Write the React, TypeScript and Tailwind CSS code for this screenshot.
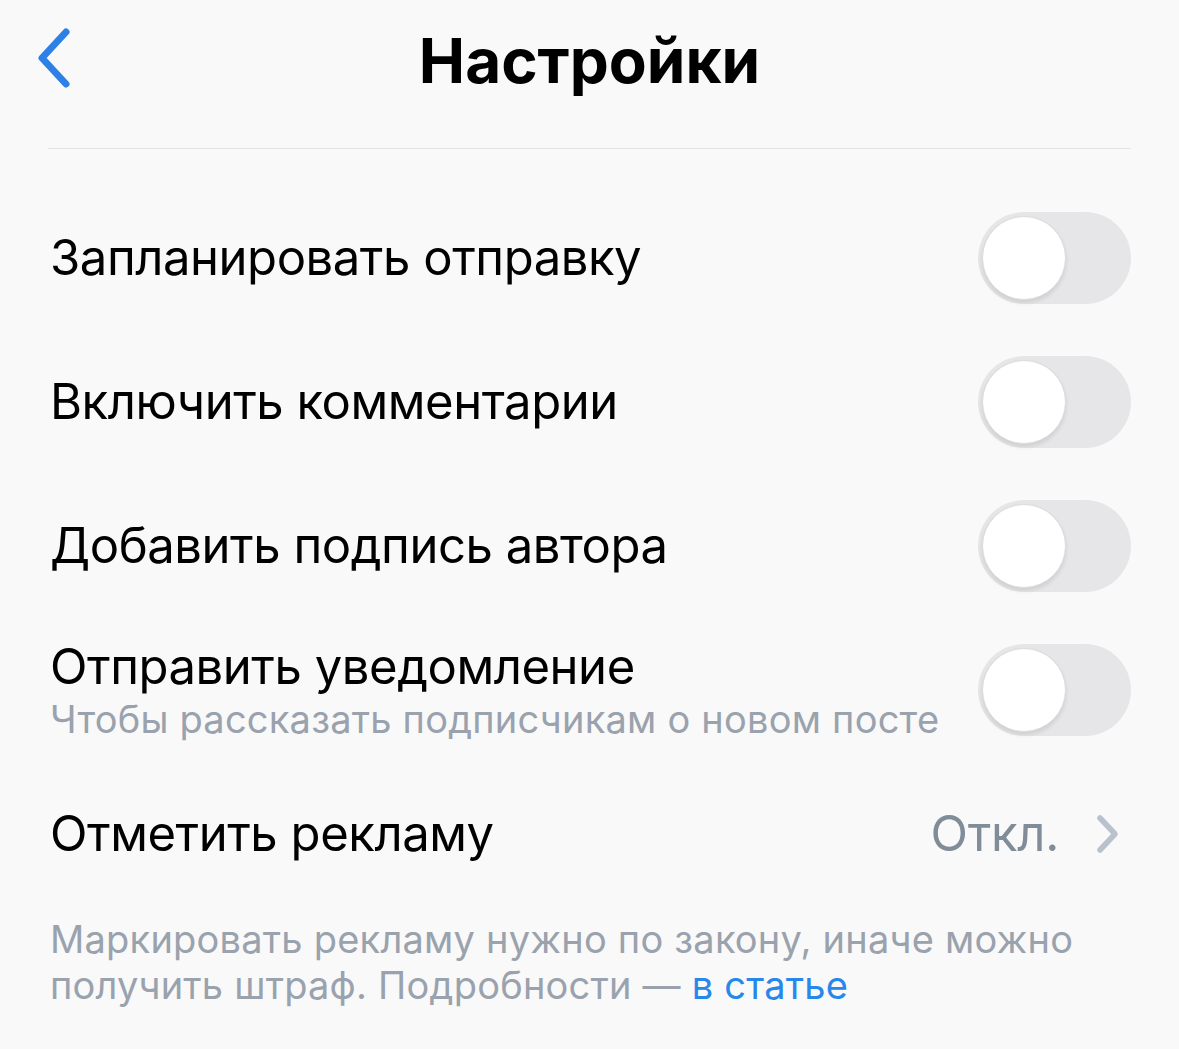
import { useState } from "react";

type Setting = {
    id: string;
    title: string;
    hint?: string;
};

const settings: Setting[] = [
    { id: "schedule", title: "Запланировать отправку" },
    { id: "comments", title: "Включить комментарии" },
    { id: "signature", title: "Добавить подпись автора" },
    {
        id: "notify",
        title: "Отправить уведомление",
        hint: "Чтобы рассказать подписчикам о новом посте",
    },
];

function Toggle({ on, onChange }: { on: boolean; onChange: () => void }) {
    return (
        <button
            onClick={onChange}
            className={`relative w-[153px] h-[92px] shrink-0 rounded-full ${on ? "bg-[#2688eb]" : "bg-[#e6e6e8]"}`}
        >
            <span
                className={`absolute top-[4px] w-[84px] h-[84px] rounded-full bg-white border border-[#dcdcdc] shadow-[0_3px_4px_rgba(0,0,0,0.10)] ${on ? "left-[65px]" : "left-[4px]"}`}
            />
        </button>
    );
}

function BackIcon() {
    return (
        <svg width="40" height="64" viewBox="0 0 40 64" fill="none">
            <path
                d="M32 6 L8 32 L32 58"
                stroke="#2d81e6"
                strokeWidth="7"
                strokeLinecap="round"
                strokeLinejoin="round"
            />
        </svg>
    );
}

function ChevronRight() {
    return (
        <svg width="26" height="40" viewBox="0 0 26 40" fill="none">
            <path
                d="M5 4 L20 20 L5 36"
                stroke="#b8c1cc"
                strokeWidth="5.5"
                strokeLinecap="round"
                strokeLinejoin="round"
            />
        </svg>
    );
}

export default function App() {
    const [state, setState] = useState<Record<string, boolean>>({});

    return (
        <div className="min-h-[1049px] w-[1179px] bg-[#f9f9f9] text-black font-['Inter','Noto_Sans',sans-serif]">
            <header className="relative h-[149px] mx-[48px] border-b border-[#e3e3e5] flex items-center justify-center">
                <button className="absolute left-[-14px] top-[26px]">
                    <BackIcon />
                </button>
                <h1 className="text-[62px] font-bold tracking-[0px] -mt-[28px]">
                    Настройки
                </h1>
            </header>

            <div className="pt-[37px] mx-[48px]">
                {settings.map((s) => (
                    <div key={s.id} className="h-[144px] flex items-center justify-between">
                        <div className="flex flex-col pl-[2px]">
                            <span className="text-[49px] leading-[58px] tracking-[-0.45px]">
                                {s.title}
                            </span>
                            {s.hint && (
                                <span className="text-[38px] leading-[46px] text-[#99a2ad] tracking-[0.22px]">
                                    {s.hint}
                                </span>
                            )}
                        </div>
                        <Toggle
                            on={!!state[s.id]}
                            onChange={() => setState({ ...state, [s.id]: !state[s.id] })}
                        />
                    </div>
                ))}

                <div className="h-[144px] flex items-center justify-between">
                    <span className="pl-[2px] text-[49px] leading-[58px] tracking-[-0.45px]">
                        Отметить рекламу
                    </span>
                    <div className="flex items-center gap-[36px] pr-[10px]">
                        <span className="text-[49px] text-[#818c99] tracking-[-0.3px]">Откл.</span>
                        <ChevronRight />
                    </div>
                </div>

                <p className="pt-[10px] pl-[2px] text-[38px] leading-[46px] text-[#99a2ad] tracking-[0.22px]">
                    Маркировать рекламу нужно по закону, иначе можно
                    <br />
                    получить штраф. Подробности —{" "}
                    <a className="text-[#2688eb]">в статье</a>
                </p>
            </div>
        </div>
    );
}
